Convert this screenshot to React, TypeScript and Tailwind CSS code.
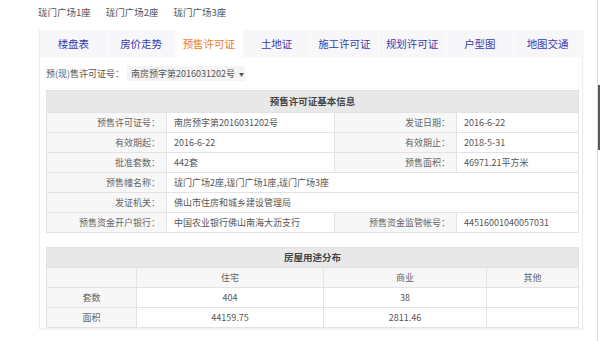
const tabs = ["楼盘表", "房价走势", "预售许可证", "土地证", "施工许可证", "规划许可证", "户型图", "地图交通"];

const info: [string, string, string?, string?][] = [
  ["预售许可证号：", "南房预字第2016031202号", "发证日期：", "2016-6-22"],
  ["有效期起：", "2016-6-22", "有效期止：", "2018-5-31"],
  ["批准套数：", "442套", "预售面积：", "46971.21平方米"],
  ["预售幢名称：", "珑门广场2座,珑门广场1座,珑门广场3座"],
  ["发证机关：", "佛山市住房和城乡建设管理局"],
  ["预售资金开户银行：", "中国农业银行佛山南海大沥支行", "预售资金监管帐号：", "44516001040057031"],
];

const usage = [
  ["套数", "404", "38", ""],
  ["面积", "44159.75", "2811.46", ""],
];

export default function App() {
  const label = "bg-[#f7f7f7] text-right pr-[6px] text-[#666] border border-[#e3e3e3]";
  const value = "pl-[7px] text-[#555] border border-[#e3e3e3]";

  return (
    <div className="w-[600px] h-[341px] bg-white overflow-hidden flex font-['Noto_Sans_CJK_SC','Microsoft_YaHei',sans-serif]">
      <div className="w-[597px] shrink-0 pl-[39px]">
        <div className="h-[30px] flex items-start pt-[5px] gap-[15px] text-[9.5px] text-[#555] -ml-[1px]">
          <span>珑门广场1座</span>
          <span>珑门广场2座</span>
          <span>珑门广场3座</span>
        </div>

        <div className="w-[544px] h-[299px] border border-[#eeeeee] border-t-0 shadow-[0_1px_2px_rgba(0,0,0,0.04)]">
          <div className="flex h-[27px] bg-[#f7f7f9]">
            {tabs.map((t, i) => (
              <div
                key={t}
                className={
                  "w-[68px] flex items-center justify-center text-[10.5px] border-r border-[#fdfdfd] " +
                  (i === 2 ? "bg-white text-[#f07a1e]" : "text-[#3b3bb0]")
                }
              >
                {t}
              </div>
            ))}
          </div>

          <div className="px-[6px]">
            <div className="h-[33px] flex items-center text-[9px] text-[#555]">
              <span>预(现)售许可证号：</span>
              <span className="ml-[3px] h-[15px] w-[118px] flex items-center pl-[4px] bg-[#f4f4f4] text-[#555]">
                南房预字第2016031202号
                <span className="ml-[4px] text-[5px]">▼</span>
              </span>
            </div>

            <table className="w-[532px] border-collapse text-[9px] table-fixed">
              <colgroup>
                <col className="w-[120px]" />
                <col className="w-[168px]" />
                <col className="w-[122px]" />
                <col className="w-[122px]" />
              </colgroup>
              <tbody>
                <tr className="h-[22px]">
                  <td colSpan={4} className="bg-[#e8e8e8] text-center font-bold text-[9.5px] text-[#444] border border-[#e3e3e3]">
                    预售许可证基本信息
                  </td>
                </tr>
                {info.map((r) => (
                  <tr key={r[0]} className="h-[20px]">
                    <td className={label}>{r[0]}</td>
                    {r[2] ? (
                      <>
                        <td className={value}>{r[1]}</td>
                        <td className={label}>{r[2]}</td>
                        <td className={value}>{r[3]}</td>
                      </>
                    ) : (
                      <td colSpan={3} className={value}>{r[1]}</td>
                    )}
                  </tr>
                ))}
              </tbody>
            </table>

            <table className="mt-[14px] w-[532px] border-collapse text-[9px] table-fixed">
              <colgroup>
                <col className="w-[90px]" />
                <col className="w-[187px]" />
                <col className="w-[163px]" />
                <col className="w-[92px]" />
              </colgroup>
              <tbody>
                <tr className="h-[20px]">
                  <td colSpan={4} className="bg-[#e8e8e8] text-center font-bold text-[9.5px] text-[#444] border border-[#e3e3e3]">
                    房屋用途分布
                  </td>
                </tr>
                <tr className="h-[20px] text-[#666] text-center">
                  <td className="bg-[#f7f7f7] border border-[#e3e3e3]"></td>
                  <td className="bg-[#f7f7f7] border border-[#e3e3e3]">住宅</td>
                  <td className="bg-[#f7f7f7] border border-[#e3e3e3]">商业</td>
                  <td className="bg-[#f7f7f7] border border-[#e3e3e3]">其他</td>
                </tr>
                {usage.map((r) => (
                  <tr key={r[0]} className="h-[20px] text-center text-[#555]">
                    <td className="bg-[#f7f7f7] text-[#666] border border-[#e3e3e3]">{r[0]}</td>
                    <td className="border border-[#e3e3e3]">{r[1]}</td>
                    <td className="border border-[#e3e3e3]">{r[2]}</td>
                    <td className="border border-[#e3e3e3]">{r[3]}</td>
                  </tr>
                ))}
              </tbody>
            </table>
          </div>
        </div>
      </div>

      <div className="flex-1 border-l border-[#dcdcdc] pt-[85px]">
        <div className="h-[65px] bg-[#5a5a52]" />
      </div>
    </div>
  );
}
